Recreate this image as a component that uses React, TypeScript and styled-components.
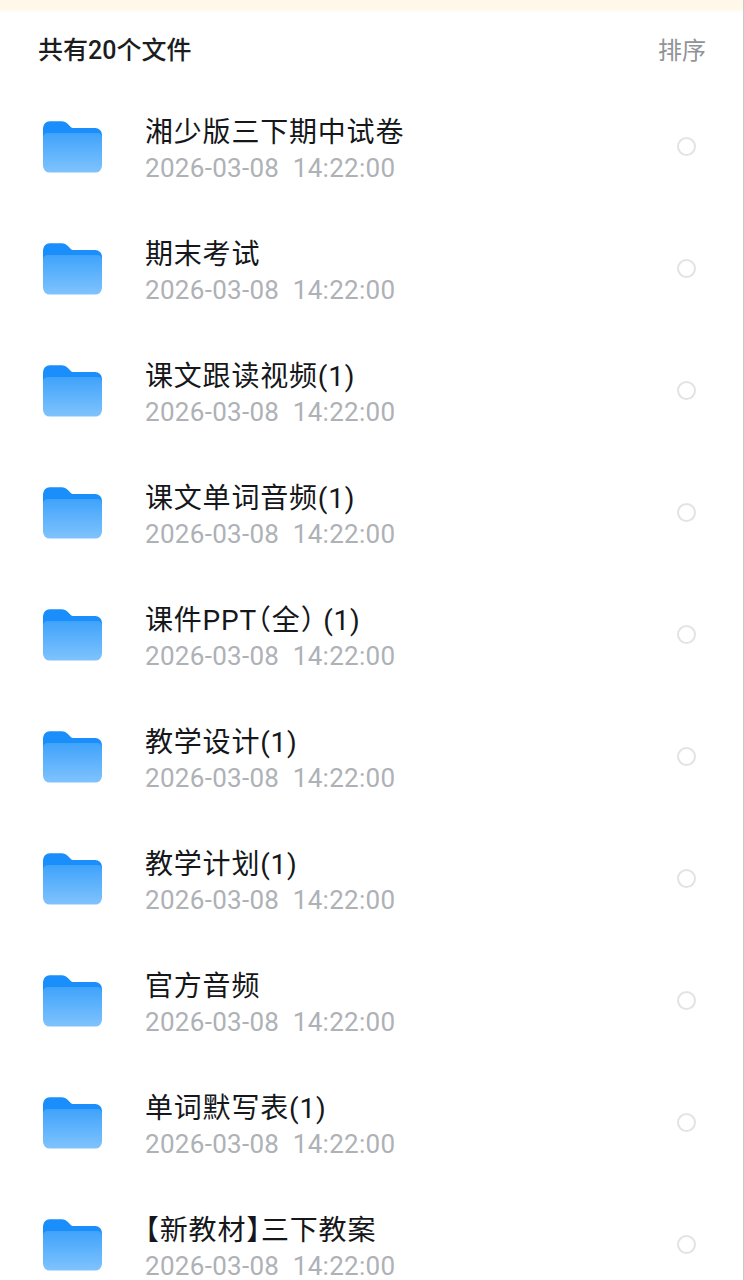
import styled, { createGlobalStyle } from "styled-components";

const folders = [
  "湘少版三下期中试卷",
  "期末考试",
  "课文跟读视频(1)",
  "课文单词音频(1)",
  "课件PPT（全） (1)",
  "教学设计(1)",
  "教学计划(1)",
  "官方音频",
  "单词默写表(1)",
  "【新教材】三下教案",
];

const GlobalStyle = createGlobalStyle`
  html, body {
    margin: 0;
    padding: 0;
    height: 1280px;
    overflow: hidden;
    background: #fff;
  }
`;

const Page = styled.div`
  width: 744px;
  height: 1280px;
  overflow: hidden;
  box-sizing: border-box;
  border-right: 1px solid #c9c9c9;
  background: #fff;
  font-family: Roboto, "Noto Sans CJK SC", sans-serif;
`;

const Banner = styled.div`
  height: 12px;
  background: linear-gradient(#fff8ea 70%, #fffdf8);
`;

const Header = styled.header`
  display: flex;
  justify-content: space-between;
  align-items: center;
  height: 34px;
  padding: 19px 37px 0 38px;
`;

const Count = styled.h1`
  margin: 0;
  font-size: 25px;
  font-weight: 500;
  color: #1b1d21;
`;

const SortButton = styled.button`
  border: 0;
  padding: 0;
  background: none;
  font: inherit;
  font-size: 24px;
  color: #909398;
`;

const List = styled.ul`
  list-style: none;
  margin: 0;
  padding: 20px 0 0;
`;

const Row = styled.li`
  display: flex;
  align-items: center;
  height: 122px;
  padding: 0 47px 0 43px;
`;

const FolderIcon = styled.svg`
  flex: none;
  width: 59px;
  height: 53px;
  margin-right: 43px;
`;

const Info = styled.div`
  flex: 1;
  min-width: 0;
  padding-top: 8px;
`;

const Title = styled.div`
  font-size: 28px;
  line-height: 36px;
  letter-spacing: 0.8px;
  font-feature-settings: "halt";
  color: #15171a;
`;

const Stamp = styled.div`
  font-size: 26px;
  line-height: 34px;
  letter-spacing: 0.3px;
  white-space: pre;
  color: #aeb1b6;
`;

const Radio = styled.span`
  flex: none;
  box-sizing: border-box;
  width: 19px;
  height: 19px;
  border: 2px solid #e2e3e5;
  border-radius: 50%;
`;

const Folder = () => (
  <FolderIcon viewBox="0 0 61 54">
    <defs>
      <linearGradient id="folderFront" x1="0" y1="0" x2="0" y2="1">
        <stop offset="0" stopColor="#3fa3fb" />
        <stop offset="1" stopColor="#80c3fd" />
      </linearGradient>
    </defs>
    <path
      d="M0 8a7 7 0 0 1 7-7h12c3 0 5 1 7 3l3 3c1 1 2 1 4 1h21a7 7 0 0 1 7 7v10H0z"
      fill="#1a8ffb"
    />
    <path
      d="M0 18c0-3 2-5 5-5h51c3 0 5 2 5 5v29a7 7 0 0 1-7 7H7a7 7 0 0 1-7-7z"
      fill="url(#folderFront)"
    />
  </FolderIcon>
);

export default function App() {
  return (
    <Page>
      <GlobalStyle />
      <Banner />
      <Header>
        <Count>共有20个文件</Count>
        <SortButton>排序</SortButton>
      </Header>
      <List>
        {folders.map((name) => (
          <Row key={name}>
            <Folder />
            <Info>
              <Title>{name}</Title>
              <Stamp>2026-03-08  14:22:00</Stamp>
            </Info>
            <Radio />
          </Row>
        ))}
      </List>
    </Page>
  );
}
